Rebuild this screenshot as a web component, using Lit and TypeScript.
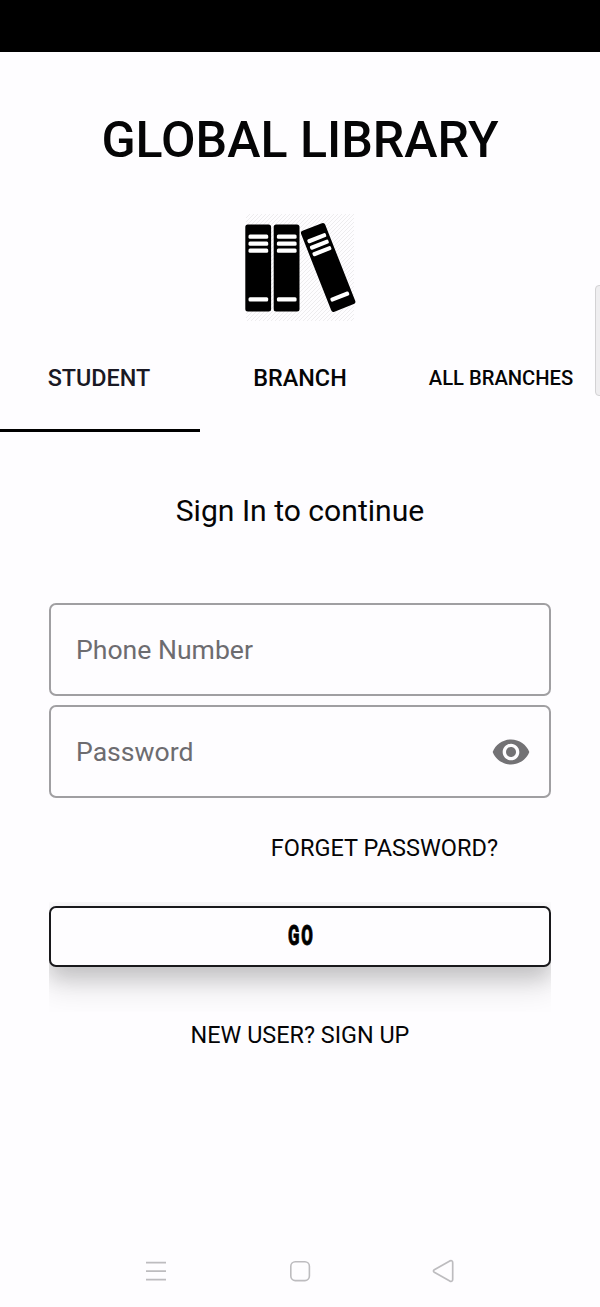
import { LitElement, html, svg, css } from "lit";
import { customElement, state } from "lit/decorators.js";

const TABS = [
  { id: "student", label: "STUDENT" },
  { id: "branch", label: "BRANCH" },
  { id: "all", label: "ALL BRANCHES" },
];

function book(x: number, transform: string) {
  return svg`<g transform=${transform}>
    <rect x=${x} y="224.500" width="25.800" height="87" rx="2.500" fill="#000" />
    ${[234.5, 241.5, 248.5, 297.3].map(
      (y) => svg`<rect x=${x + 3.2} y=${y} width="19.700" height="4.200" rx="1.500" fill="#fff" />`
    )}
  </g>`;
}

@customElement("app-root")
export class AppRoot extends LitElement {
  @state() active = "student";
  @state() reveal = false;

  static styles = css`
    :host { display: block; }
    * { box-sizing: border-box; }
    .screen {
      position: relative;
      display: flex;
      flex-direction: column;
      width: 600px;
      height: 1307px;
      overflow: hidden;
      background: #fefdff;
      color: #050506;
      font-family: Roboto, "Noto Sans", sans-serif;
    }
    .status { height: 52px; flex: none; background: #000; }
    h1 {
      margin: 58px 0 0;
      height: 60px;
      line-height: 60px;
      text-align: center;
      font-weight: 500;
      font-size: 50.1px;
      white-space: nowrap;
    }
    .logo { display: block; width: 112px; height: 110px; margin: 42px auto 0; flex: none; }
    .tabs { display: grid; grid-template-columns: repeat(3, 200px); height: 110px; flex: none; }
    .tab {
      appearance: none;
      border: 0;
      border-bottom: 3px solid transparent;
      background: none;
      padding: 5px 0 0;
      height: 110px;
      font: 500 23.4px/102px Roboto, sans-serif;
      color: #050506;
      text-align: center;
      white-space: nowrap;
    }
    .tab.active { border-bottom-color: #000; color: #1a1924; padding-right: 2px; }
    .tab.small { font-size: 20.2px; padding-left: 2px; }
    .subtitle { margin: 59px 0 0; height: 40px; line-height: 40px; text-align: center; font-size: 30.1px; }
    .form { display: flex; flex-direction: column; gap: 9px; margin: 72px 49px 0; }
    .field {
      display: flex;
      align-items: center;
      justify-content: space-between;
      height: 93px;
      padding: 0 18px 0 25px;
      border: 2px solid #a09fa2;
      border-radius: 7px;
      font-size: 26.6px;
      color: #6d6c70;
    }
    .eye { display: block; width: 40px; height: 40px; }
    .forgot { margin: 34px 102px 0 0; height: 32px; line-height: 32px; text-align: right; font-size: 23.5px; }
    .go-wrap {
      height: 110px;
      margin: 38px 49px 0;
      padding: 4px 0 0;
      overflow: hidden;
      flex: none;
    }
    .go {
      appearance: none;
      display: flex;
      align-items: center;
      justify-content: center;
      width: 502px;
      height: 61px;
      padding: 0 0 2px;
      border: 2px solid #19191c;
      border-radius: 7px;
      background: #fefdff;
      box-shadow: 0 10px 20px rgba(0, 0, 0, 0.14), 0 16px 32px 4px rgba(0, 0, 0, 0.12);
      color: #000;
      font: 900 28px/56px Roboto, sans-serif;
      letter-spacing: 3px;
    }
    .go span { display: block; transform: scaleX(0.6); margin-right: -3px; -webkit-text-stroke: 0.8px #000; }
    .signup { margin: 7px 0 0; height: 32px; line-height: 32px; text-align: center; font-size: 23.4px; }
    .nav {
      display: flex;
      justify-content: space-between;
      margin: auto 144px 22px;
      height: 28px;
      flex: none;
    }
    .nav svg { display: block; width: 24px; height: 28px; }
    .handle {
      position: absolute;
      right: -6px;
      top: 285px;
      width: 11px;
      height: 111px;
      border: 1px solid #d3d2d4;
      border-radius: 4px;
      background: #efeef0;
    }
  `;

  render() {
    return html`
      <main class="screen">
        <div class="status"></div>
        <h1>GLOBAL LIBRARY</h1>
        <svg class="logo" viewBox="244 212 112 110">
          <defs>
            <pattern id="hatch" width="4" height="4" patternUnits="userSpaceOnUse">
              <path d="M-1 1L1-1M0 4L4 0M3 5L5 3" stroke="#edecee" stroke-width="1" />
            </pattern>
          </defs>
          <rect x="246" y="214" width="108" height="107" fill="url(#hatch)" />
          ${[245.3, 273.7].map((x) => book(x, ""))}
          ${book(-12.8, "translate(328 267.3) rotate(-21.5) translate(0 -267.8)")}
        </svg>
        <nav class="tabs">
          ${TABS.map(
            (t) => html`<button
              class="tab ${t.id === this.active ? "active" : ""} ${t.id === "all" ? "small" : ""}"
              @click=${() => (this.active = t.id)}
            >${t.label}</button>`
          )}
        </nav>
        <p class="subtitle">Sign In to continue</p>
        <section class="form">
          <div class="field"><span>Phone Number</span></div>
          <div class="field">
            <span>Password</span>
            <svg class="eye" viewBox="0 0 24 24" @click=${() => (this.reveal = !this.reveal)}>
              <path fill="#737275" d="M12 4.5C7 4.5 2.73 7.61 1 12c1.73 4.39 6 7.5 11 7.5s9.270-3.110 11-7.500c-1.730-4.390-6-7.500-11-7.500zM12 17c-2.760 0-5-2.240-5-5s2.240-5 5-5 5 2.240 5 5-2.240 5-5 5zm0-8c-1.660 0-3 1.340-3 3s1.340 3 3 3 3-1.340 3-3-1.340-3-3-3z" />
            </svg>
          </div>
        </section>
        <div class="forgot">FORGET PASSWORD?</div>
        <div class="go-wrap"><button class="go"><span>GO</span></button></div>
        <div class="signup">NEW USER? SIGN UP</div>
        <footer class="nav">
          <svg viewBox="0 0 24 28" stroke="#bdbcbf" stroke-width="1.8" fill="none">
            <path d="M2 5.700H22M2 14.200H22M2 22.600H22" />
          </svg>
          <svg viewBox="0 0 24 28" stroke="#bdbcbf" stroke-width="1.6" fill="none">
            <rect x="2.800" y="4.800" width="18.600" height="18.800" rx="4.500" />
          </svg>
          <svg viewBox="0 0 24 28" stroke="#bdbcbf" stroke-width="1.7" fill="none" stroke-linejoin="round">
            <path d="M2.300 12.700L17.800 3.900Q20.700 2.900 20.700 5.700V22.300Q20.700 25.100 17.800 24.100L2.300 15.300Q0.600 14 2.300 12.700Z" />
          </svg>
        </footer>
        <div class="handle"></div>
      </main>
    `;
  }
}
